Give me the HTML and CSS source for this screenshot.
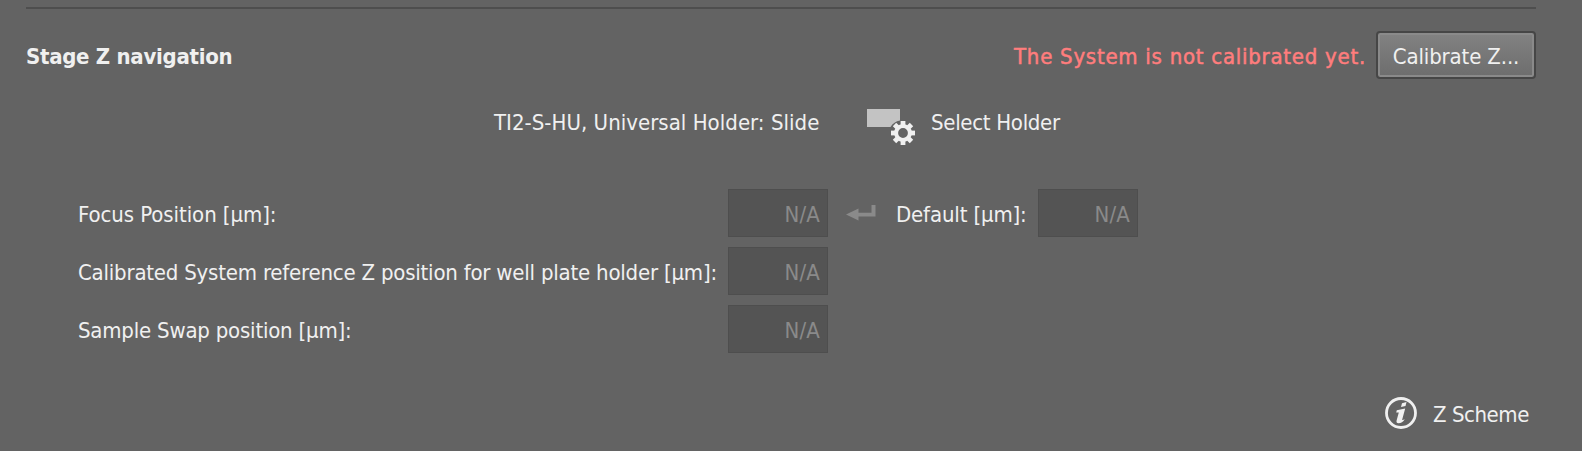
FILE: index.html
```html
<!DOCTYPE html>
<html lang="en">
<head>
<meta charset="utf-8">
<title>Stage Z navigation</title>
<link rel="stylesheet" href="styles.css">
</head>
<body>
<section class="panel">
  <header class="header">
    <h2 class="title">Stage Z navigation</h2>
    <span class="warning">The System is not calibrated yet.</span>
    <button class="button">Calibrate Z...</button>
  </header>
  <div class="holder">
    <span class="holder-name">TI2-S-HU, Universal Holder: Slide</span>
    <svg class="holder-icon" width="50" height="38" viewBox="0 0 50 38">
      <path fill="#c3c3c3" d="M0 0H33V11.5A14 14 0 0 0 23.5 18H0Z"/>
      <g transform="translate(36 24)">
        <circle r="6.9" fill="none" stroke="#f0f0f0" stroke-width="4"/>
        <g fill="#f0f0f0">
          <path id="tooth" d="M-2.4-12H2.4V-7H-2.4Z"/>
          <use href="#tooth" transform="rotate(45)"/>
          <use href="#tooth" transform="rotate(90)"/>
          <use href="#tooth" transform="rotate(135)"/>
          <use href="#tooth" transform="rotate(180)"/>
          <use href="#tooth" transform="rotate(225)"/>
          <use href="#tooth" transform="rotate(270)"/>
          <use href="#tooth" transform="rotate(315)"/>
        </g>
      </g>
    </svg>
    <span class="select">Select Holder</span>
  </div>
  <div class="fields">
    <div class="row">
      <label class="label focus">Focus Position [µm]:</label>
      <div class="field">N/A</div>
      <svg class="enter-icon" width="30" height="16" viewBox="0 0 30 16">
        <path fill="#8a8a8a" d="M0 9.5L12.5 3.5V7.8H25.5V0H29.5V11.5H12.5V15.5Z"/>
      </svg>
      <label class="default">Default [µm]:</label>
      <div class="field">N/A</div>
    </div>
    <div class="row">
      <label class="label">Calibrated System reference Z position for well plate holder [µm]:</label>
      <div class="field">N/A</div>
    </div>
    <div class="row">
      <label class="label">Sample Swap position [µm]:</label>
      <div class="field">N/A</div>
    </div>
  </div>
  <footer class="footer">
    <svg width="32" height="32" viewBox="0 0 32 32">
      <circle cx="16" cy="16" r="14.5" fill="none" stroke="#f0f0f0" stroke-width="2.8"/>
      <path fill="#f0f0f0" d="M17 6.2L21.5 5L20.5 9L16 10ZM11.8 13.2L20.2 11.4L17.2 22.4Q17 23.6 19.8 22.2Q17.4 26 13.4 26.3Q11 26.2 11.6 23.6L13.8 15.4L11.2 15.4Z"/>
    </svg>
    <span class="scheme">Z Scheme</span>
  </footer>
</section>
</body>
</html>
```
FILE: styles.css
```css
* { box-sizing: border-box; }
body {
  margin: 0;
  background: #636363;
  color: #f0f0f0;
  font: 22px/26px "DejaVu Sans Condensed", "DejaVu Sans", sans-serif;
  font-stretch: condensed;
  white-space: nowrap;
}
.panel {
  width: 1510px;
  height: 444px;
  margin: 7px 0 0 26px;
  border-top: 2px solid #4e4e4e;
}
.header { display: flex; align-items: center; height: 70px; padding-top: 22px; }
.title {
  flex: 1;
  margin: 0;
  padding-top: 3px;
  font-size: 22px;
  line-height: 26px;
  font-weight: bold;
  letter-spacing: -0.28px;
}
.warning {
  margin-right: 10px;
  padding-top: 3px;
  color: #ff7d7d;
  letter-spacing: 0.74px;
  -webkit-text-stroke: 0.5px #ff7d7d;
}
.button {
  width: 160px;
  height: 48px;
  padding: 3px 0 0;
  border: 2px solid #464646;
  border-radius: 4px;
  background: linear-gradient(#828282, #6d6d6d);
  box-shadow: inset 0 0 0 2px #8a8a8a;
  color: inherit;
  font: inherit;
  letter-spacing: -0.15px;
}
.holder { display: flex; height: 38px; margin: 30px 0 0 468px; }
.holder span { margin-top: 1px; }
.holder-name { width: 373px; letter-spacing: 0.03px; }
.select { margin-left: 14px; letter-spacing: -0.3px; }
.fields { display: grid; gap: 10px; margin: 42px 0 0 52px; }
.row { display: flex; align-items: center; height: 48px; }
.label { width: 650px; padding-top: 3px; letter-spacing: -0.21px; }
.focus { letter-spacing: -0.08px; }
.field {
  width: 100px;
  height: 48px;
  padding: 12px 7px 0 0;
  border: 1px solid #4e4e4e;
  background: #545454;
  color: #8a8a8a;
  text-align: right;
  letter-spacing: 0.2px;
}
.enter-icon { margin: 0 20px 0 18px; }
.default { width: 142px; padding-top: 3px; letter-spacing: -0.15px; }
.footer { display: flex; align-items: center; height: 32px; margin: 44px 0 0 1359px; }
.scheme { margin-left: 16px; padding-top: 3px; letter-spacing: -0.45px; }
```
